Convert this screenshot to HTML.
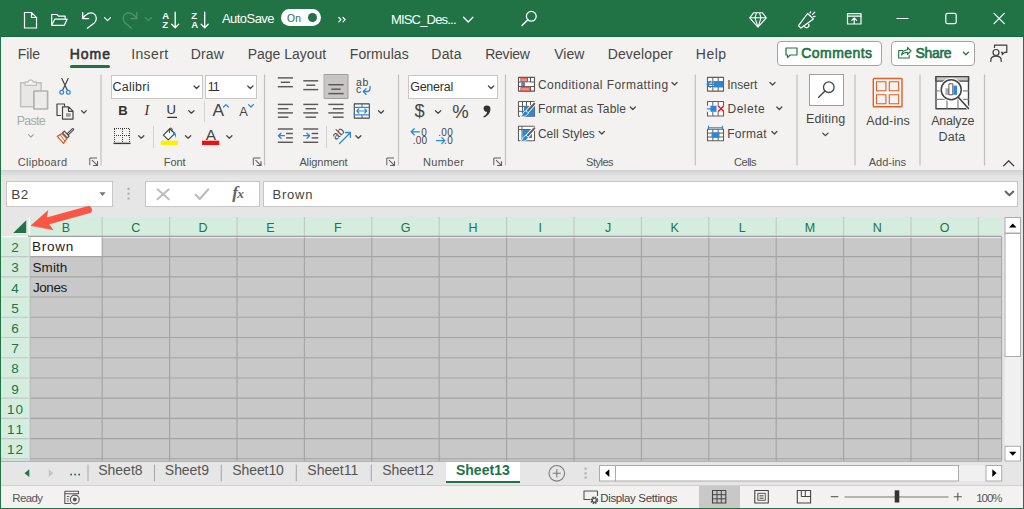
<!DOCTYPE html>
<html>
<head>
<meta charset="utf-8">
<title>Excel</title>
<style>
*{box-sizing:border-box;margin:0;padding:0}
html,body{width:1024px;height:509px;overflow:hidden;background:#f3f2f1;font-family:"Liberation Sans",sans-serif;}
#app{position:relative;width:1024px;height:509px;overflow:hidden;background:#f3f2f1;}
.abs{position:absolute}
.t{position:absolute;white-space:nowrap;line-height:1;color:#444}
svg{position:absolute;overflow:visible}
/* frame */
#bl{left:0;top:0;width:1px;height:509px;background:#217346}
#br{left:1022.5px;top:0;width:1.5px;height:509px;background:#217346}
#bb{left:0;top:508px;width:1024px;height:1px;background:#217346}
/* title bar */
#title{left:0;top:0;width:1024px;height:37px;background:#217346}
/* tab row */
#tabs{left:1px;top:37px;width:1022px;height:33px;background:#f3f2f1}
/* ribbon */
#ribbon{left:1px;top:70px;width:1022px;height:100px;background:#f3f2f1}
/* formula bar */
#fbar{left:1px;top:170px;width:1022px;height:47px;background:#e6e6e6}
#fshadow{left:1px;top:170px;width:1022px;height:7px;background:linear-gradient(#d2d2d2,#e6e6e6)}
/* grid */
#grid{left:1px;top:217px;width:1001px;height:244px;background:#c6c6c6}
/* sheet tabs */
#sheetbar{left:1px;top:461px;width:1022px;height:25px;background:#e6e6e6}
#status{left:1px;top:486px;width:1022px;height:22px;background:#f3f2f1}
</style>
</head>
<body>
<div id="app">
<div id="title" class="abs"></div>
<div id="tabs" class="abs"></div>
<div id="ribbon" class="abs"></div>
<div id="fbar" class="abs"></div>
<div id="fshadow" class="abs"></div>
<div id="grid" class="abs"></div>
<div id="sheetbar" class="abs"></div>
<div id="status" class="abs"></div>
<!--TITLE-->
<!-- title bar icons -->
<svg style="left:0;top:0" width="1024" height="37" viewBox="0 0 1024 37" fill="none" stroke="#fff" stroke-width="1.2" stroke-linejoin="round" stroke-linecap="round">
<!-- new doc -->
<path d="M24.5 12.5h7l5 5v10.5h-12z M31.5 12.5v5h5" stroke-linejoin="miter"/>
<!-- open folder -->
<path d="M51.7 25.3v-10.8h5.2l1.7 1.7h6.6v3 M51.7 25.3l3-6.1h12.4l-2.8 6.1z"/>
<!-- undo -->
<path d="M82.7 12.6v6h6 M82.9 18.4c2.5-4.5 7.5-6.8 11-4.6c3.300 2.100 3.100 6.400 0.300 9.200l-6.800 5.200" stroke-width="1.3"/>
<path d="M104.500 17.600l3 3l3-3" stroke-width="1.2"/>
<!-- redo (dim) -->
<g stroke="#4f9570">
<path d="M136.800 12.600v6h-6 M136.600 18.400c-2.500-4.500-7.500-6.800-11-4.600c-3.300 2.100-3.100 6.400-0.300 9.200l6.200 5.200" stroke-width="1.3"/>
<path d="M145.300 17.600l3 3l3-3"/>
</g>
<!-- sort arrows -->
<path d="M175.200 12.200v15.500 M171.700 24.300l3.500 3.500l3.500-3.500 M204.700 12.200v15.500 M201.200 24.300l3.500 3.500l3.500-3.500" stroke-width="1.3"/>
<!-- chevron >> -->
<path d="M338.800 17.500l2.200 2.200l-2.200 2.200 M343 17.500l2.200 2.200l-2.200 2.200" stroke-width="1.2"/>
<!-- title chevron -->
<path d="M463.500 17.300l4.700 4.700l4.700-4.700" stroke-width="1.3"/>
<!-- search -->
<circle cx="531.300" cy="16.300" r="4.900" stroke-width="1.300"/><path d="M527.800 19.800l-5.800 5.800" stroke-width="1.400"/>
<!-- diamond -->
<path d="M753.500 12.800h9l3.800 5l-8.300 9.300l-8.300-9.300z M749.700 17.800h16.600 M755 17.800l3 9.300l3-9.300 M755 17.800l1.500-5 M761 17.800l-1.500-5" stroke-width="1.100"/>
<!-- megaphone -->
<path d="M807.600 13.500L813.400 18.900L800.900 28.100L798.500 25.700Z M804.300 26.300a2.400 2.400 0 0 0 4.400-2" stroke-width="1.250"/>
<path d="M810 13l0.600-1.200 M812.400 14.400l2.300-2.200 M813.300 16.600l1.700-0.200" stroke-width="1.250"/>
<!-- ribbon display -->
<rect x="847.500" y="13.700" width="13.500" height="10.300" stroke-width="1.200"/><path d="M847.500 16.200h13.500" stroke-width="1.200"/><path d="M854.200 23.500v-5.500 M851.800 20.300l2.400-2.400l2.400 2.400" stroke-width="1.200"/>
<!-- window controls -->
<path d="M897 18.500h11" stroke-width="1.200"/>
<rect x="945.800" y="13.300" width="10.400" height="10.400" rx="1.800" stroke-width="1.200"/>
<path d="M994 13.300l10.300 10.300 M1004.300 13.300l-10.300 10.300" stroke-width="1.200"/>
</svg>
<div class="abs" style="left:281px;top:9px;width:40px;height:17px;border-radius:9px;background:#fff"></div>
<div class="abs" style="left:308px;top:13.200px;width:9.200px;height:9.200px;border-radius:5px;background:#217346"></div>
<div class="t" id="autosave" style="left:221.97px;top:12px;font-size:13px;color:#fff;letter-spacing:-0.54px;">AutoSave</div>
<div class="t" id="on" style="left:287.02px;top:14px;font-size:10.3px;color:#217346;letter-spacing:0.2px;">On</div>
<div class="t" id="fname" style="left:390.93px;top:13px;font-size:13px;color:#fff;letter-spacing:-0.81px;">MISC_Des...</div>
<div class="t" style="left:162.17px;top:11px;font-size:9.5px;color:#fff;font-weight:bold;">A</div>
<div class="t" style="left:162.32px;top:20px;font-size:9.5px;color:#fff;font-weight:bold;">Z</div>
<div class="t" style="left:191.32px;top:11px;font-size:9.5px;color:#fff;font-weight:bold;">Z</div>
<div class="t" style="left:191.17px;top:20px;font-size:9.5px;color:#fff;font-weight:bold;">A</div>
<div class="abs" id="tline" style="left:0;top:36px;width:1024px;height:1px;background:#156a3b"></div>
<!--/TITLE-->
<!--TABS-->
<div class="t" style="left:17.85px;top:47px;font-size:14px;color:#484644;letter-spacing:-0.16px;">File</div>
<div class="t" style="left:131.21px;top:47px;font-size:14px;color:#484644;letter-spacing:0.37px;">Insert</div>
<div class="t" style="left:190.65px;top:47px;font-size:14px;color:#484644;letter-spacing:0.15px;">Draw</div>
<div class="t" style="left:247.65px;top:47px;font-size:14px;color:#484644;">Page Layout</div>
<div class="t" style="left:349.85px;top:47px;font-size:14px;color:#484644;letter-spacing:0.07px;">Formulas</div>
<div class="t" style="left:431.35px;top:47px;font-size:14px;color:#484644;letter-spacing:0.19px;">Data</div>
<div class="t" style="left:485.15px;top:47px;font-size:14px;color:#484644;letter-spacing:-0.22px;">Review</div>
<div class="t" style="left:554.24px;top:47px;font-size:14px;color:#484644;letter-spacing:0.04px;">View</div>
<div class="t" style="left:607.65px;top:47px;font-size:14px;color:#484644;letter-spacing:0.16px;">Developer</div>
<div class="t" style="left:695.85px;top:47px;font-size:14px;color:#484644;letter-spacing:0.47px;">Help</div>
<div class="t" style="left:69.65px;top:47px;font-size:14px;color:#323130;letter-spacing:0.98px;-webkit-text-stroke:0.55px #323130;">Home</div>
<div class="abs" style="left:70px;top:65px;width:40px;height:3px;background:#217346;border-radius:1.5px"></div>
<div class="abs" style="left:777px;top:40.5px;width:105px;height:25px;background:#fff;border:1px solid #a6a4a2;border-radius:4px"></div>
<div class="abs" style="left:890.5px;top:40.5px;width:84.5px;height:25px;background:#fff;border:1px solid #a6a4a2;border-radius:4px"></div>
<div class="t" style="left:801.3px;top:46px;font-size:14px;color:#217346;letter-spacing:0.44px;-webkit-text-stroke:0.6px #217346;">Comments</div>
<div class="t" style="left:915.57px;top:46px;font-size:14px;color:#217346;letter-spacing:-0.33px;-webkit-text-stroke:0.6px #217346;">Share</div>
<svg style="left:0;top:37px" width="1024" height="33" viewBox="0 37 1024 33" fill="none" stroke-linecap="round" stroke-linejoin="round">
<path d="M786 48h11v7h-6.800l-2.700 2.600v-2.600h-1.500z" stroke="#217346" stroke-width="1.200"/>
<path d="M902.500 50.500h-3.800v7.500h10.500v-2.500 M901.500 55c0.500-3.200 2.800-5 6-5.200v-2.300l3.500 3.500l-3.500 3.500v-2.300c-2.500 0-4.500 0.800-6 2.800z" stroke="#217346" stroke-width="1.100"/>
<path d="M963.45 52.3L965.9 54.7L968.35 52.3" stroke="#217346" stroke-width="1.3" fill="none" stroke-linecap="round" stroke-linejoin="round"/>
<circle cx="996" cy="52.500" r="3" stroke="#3b3a39" stroke-width="1.200"/><path d="M990.800 61.500v-1c0-2.600 2.200-4.300 5.200-4.300s5.200 1.700 5.200 4.300v1" stroke="#3b3a39" stroke-width="1.200"/><path d="M994.500 47.500v-2.300h12.300v7.200h-2.300l-2.200 2.200v-2.200h-0.800" stroke="#3b3a39" stroke-width="1.200"/>
</svg>
<!--/TABS-->
<!--RIBBON-->
<div class="abs" style="left:110.500px;top:74.500px;width:92.500px;height:24px;background:#fff;border:1px solid #c8c6c4"></div>
<div class="abs" style="left:205px;top:74.500px;width:52px;height:24px;background:#fff;border:1px solid #c8c6c4"></div>
<div class="abs" style="left:407.500px;top:74.500px;width:90.500px;height:24px;background:#fff;border:1px solid #c8c6c4"></div>
<div class="abs" style="left:809px;top:74px;width:34.500px;height:32px;background:#fff;border:1px solid #a19f9d"></div>
<svg style="left:0;top:70px" width="1024" height="100" viewBox="0 70 1024 100" fill="none" stroke-linecap="round" stroke-linejoin="round">
<path d="M101 74.500V165.500" stroke="#c2c0be" stroke-width="1.200" stroke-linecap="butt"/>
<path d="M264.5 74.500V165.500" stroke="#c2c0be" stroke-width="1.200" stroke-linecap="butt"/>
<path d="M398.5 74.500V165.500" stroke="#c2c0be" stroke-width="1.200" stroke-linecap="butt"/>
<path d="M505.5 74.500V165.500" stroke="#c2c0be" stroke-width="1.200" stroke-linecap="butt"/>
<path d="M695.3 74.500V165.500" stroke="#c2c0be" stroke-width="1.200" stroke-linecap="butt"/>
<path d="M797 74.500V165.500" stroke="#c2c0be" stroke-width="1.200" stroke-linecap="butt"/>
<path d="M855 74.500V165.500" stroke="#c2c0be" stroke-width="1.200" stroke-linecap="butt"/>
<path d="M920 74.500V165.500" stroke="#c2c0be" stroke-width="1.200" stroke-linecap="butt"/>
<path d="M984.5 74.500V165.500" stroke="#c2c0be" stroke-width="1.200" stroke-linecap="butt"/>
<path d="M204.4 101V122" stroke="#d2d0ce" stroke-width="1" stroke-linecap="butt"/>
<path d="M153.5 126V148" stroke="#d2d0ce" stroke-width="1" stroke-linecap="butt"/>
<path d="M326.5 126V148" stroke="#d2d0ce" stroke-width="1" stroke-linecap="butt"/>
<path d="M89.8 165.200v-7.200h7.200" stroke="#605e5c" stroke-width="1" stroke-linejoin="miter" stroke-linecap="butt"/>
<path d="M92.3 160.300l5 5 M97.5 161.500v4h-4" stroke="#605e5c" stroke-width="1.100" stroke-linejoin="miter"/>
<path d="M253.3 165.200v-7.200h7.200" stroke="#605e5c" stroke-width="1" stroke-linejoin="miter" stroke-linecap="butt"/>
<path d="M255.8 160.300l5 5 M261 161.500v4h-4" stroke="#605e5c" stroke-width="1.100" stroke-linejoin="miter"/>
<path d="M386.8 165.200v-7.200h7.200" stroke="#605e5c" stroke-width="1" stroke-linejoin="miter" stroke-linecap="butt"/>
<path d="M389.3 160.300l5 5 M394.5 161.500v4h-4" stroke="#605e5c" stroke-width="1.100" stroke-linejoin="miter"/>
<path d="M493.8 165.200v-7.200h7.200" stroke="#605e5c" stroke-width="1" stroke-linejoin="miter" stroke-linecap="butt"/>
<path d="M496.3 160.300l5 5 M501.5 161.500v4h-4" stroke="#605e5c" stroke-width="1.100" stroke-linejoin="miter"/>
<path d="M20.600 82.800h20.600v24h-20.600z" fill="#e9e7e5" stroke="#c2c0be" stroke-width="1.500"/>
<path d="M25 85.300v-3.300h3a2.800 2.800 0 0 1 5.400 0h3v3.300z" stroke="#c2c0be" stroke-width="1.300" fill="#f3f2f1"/>
<rect x="33.900" y="91" width="13.700" height="18" rx="0.500" stroke="#b3b1af" stroke-width="1.700" fill="#ecebe9"/>
<path d="M28.45 134.7L30.9 137.1L33.35 134.7" stroke="#a19f9d" stroke-width="1.1" fill="none" stroke-linecap="round" stroke-linejoin="round"/>
<path d="M61.800 78.500l5.600 11.800 M68.200 78.500l-5.600 11.800" stroke="#444" stroke-width="1.200"/>
<circle cx="61.700" cy="92.300" r="1.900" stroke="#2b88d8" stroke-width="1.200"/><circle cx="68.300" cy="92.300" r="1.900" stroke="#2b88d8" stroke-width="1.200"/>
<path d="M60.500 115.500h-3.500v-11.500h7.500v2.500" stroke="#444" stroke-width="1.200"/>
<path d="M62.500 106.800h6.200l4.300 4.300v8h-10.500z M68.500 107v4.300h4.300" stroke="#444" stroke-width="1.200" fill="#f3f2f1"/>
<rect x="66" y="113.200" width="4.700" height="3.600" fill="#a19f9d"/>
<path d="M81.45 110.6L83.9 113L86.35 110.6" stroke="#444" stroke-width="1.2" fill="none" stroke-linecap="round" stroke-linejoin="round"/>
<path d="M67.500 134.500l5.500-5.200" stroke="#444" stroke-width="2.600"/>
<path d="M67.500 134.500l5.500-5.200" stroke="#f3f2f1" stroke-width="0.800"/>
<path d="M64.300 131.200l4.800 4.900l-1.800 1.800l-4.800-4.900z" stroke="#444" stroke-width="1.100" fill="#f3f2f1"/>
<path d="M61.800 133.600l4.900 5l-3.200 4.800l-6.200-7z" stroke="#d8622a" stroke-width="1.300" fill="#fdf6f1"/>
<path d="M60.500 135.500l4.500 5.500" stroke="#d8622a" stroke-width="1"/>
<path d="M194.05 86L196.55 88.5L199.05 86" stroke="#444" stroke-width="1.3" fill="none" stroke-linecap="round" stroke-linejoin="round"/>
<path d="M247.75 86L250.35 88.5L252.95 86" stroke="#444" stroke-width="1.3" fill="none" stroke-linecap="round" stroke-linejoin="round"/>
<path d="M167.300 117.400h9.700" stroke="#323130" stroke-width="1.200" stroke-linecap="butt"/>
<path d="M188.75 110.7L191.4 113.2L194.05 110.7" stroke="#444" stroke-width="1.2" fill="none" stroke-linecap="round" stroke-linejoin="round"/>
<path d="M223.500 107l2.400-2.400l2.400 2.400" stroke="#2b88d8" stroke-width="1.300"/>
<path d="M248.600 104.600l2.400 2.400l2.400-2.400" stroke="#2b88d8" stroke-width="1.300"/>
<path d="M114 128.500h16 M114 135.500h16 M114.500 129v14 M122.500 129v14 M129.500 129v14" stroke="#3b3a39" stroke-width="1" stroke-dasharray="1 1" stroke-linecap="butt"/>
<path d="M113.500 143.400h17" stroke="#3b3a39" stroke-width="1.400" stroke-linecap="butt"/>
<path d="M138.65 135.7L141.25 138.2L143.85 135.7" stroke="#444" stroke-width="1.2" fill="none" stroke-linecap="round" stroke-linejoin="round"/>
<path d="M169.800 128.800L163.400 135.100L168.300 139.900L174.700 133.600Z" stroke="#444" stroke-width="1.200" fill="#fff"/>
<path d="M169.400 132.800v-3.300a1.400 1.400 0 0 1 2.800 0v1.800" stroke="#444" stroke-width="1"/>
<path d="M173.800 131c2 1.600 2.700 4.200 2.200 7.200c-0.600-2.300-1.500-3.500-3.100-4.500z" fill="#2b88d8" stroke="none"/>
<rect x="160.800" y="140.700" width="17.200" height="4.300" fill="#ffef00"/>
<path d="M185.45 135.7L188.1 138.2L190.75 135.7" stroke="#444" stroke-width="1.2" fill="none" stroke-linecap="round" stroke-linejoin="round"/>
<rect x="202" y="140.700" width="17.200" height="4.300" fill="#ee1111"/>
<path d="M226.75 135.7L229.35 138.2L231.95 135.7" stroke="#444" stroke-width="1.2" fill="none" stroke-linecap="round" stroke-linejoin="round"/>
<rect x="324.500" y="74.500" width="23.500" height="24" fill="#c8c6c4" stroke="#a19f9d" stroke-width="1"/>
<path d="M277.8 77.9H292.9" stroke="#5a5856" stroke-width="1.45" stroke-linecap="butt"/>
<path d="M280.8 82.3H289.9" stroke="#5a5856" stroke-width="1.45" stroke-linecap="butt"/>
<path d="M277.8 86.7H292.9" stroke="#5a5856" stroke-width="1.45" stroke-linecap="butt"/>
<path d="M303.3 80.8H318.2" stroke="#5a5856" stroke-width="1.45" stroke-linecap="butt"/>
<path d="M306.3 85.2H315.2" stroke="#5a5856" stroke-width="1.45" stroke-linecap="butt"/>
<path d="M303.3 89.6H318.2" stroke="#5a5856" stroke-width="1.45" stroke-linecap="butt"/>
<path d="M328.3 84.7H343.6" stroke="#5a5856" stroke-width="1.45" stroke-linecap="butt"/>
<path d="M331.3 89.2H340.6" stroke="#5a5856" stroke-width="1.45" stroke-linecap="butt"/>
<path d="M328.3 93.6H343.6" stroke="#5a5856" stroke-width="1.45" stroke-linecap="butt"/>
<path d="M277.8 104.4H292.9" stroke="#5a5856" stroke-width="1.45" stroke-linecap="butt"/>
<path d="M277.8 108.7H288.4" stroke="#5a5856" stroke-width="1.45" stroke-linecap="butt"/>
<path d="M277.8 112.9H292.9" stroke="#5a5856" stroke-width="1.45" stroke-linecap="butt"/>
<path d="M277.8 117.2H288.4" stroke="#5a5856" stroke-width="1.45" stroke-linecap="butt"/>
<path d="M303.3 104.4H318.2" stroke="#5a5856" stroke-width="1.45" stroke-linecap="butt"/>
<path d="M305.55 108.7H315.95" stroke="#5a5856" stroke-width="1.45" stroke-linecap="butt"/>
<path d="M303.3 112.9H318.2" stroke="#5a5856" stroke-width="1.45" stroke-linecap="butt"/>
<path d="M305.55 117.2H315.95" stroke="#5a5856" stroke-width="1.45" stroke-linecap="butt"/>
<path d="M328.3 104.4H343.6" stroke="#5a5856" stroke-width="1.45" stroke-linecap="butt"/>
<path d="M332.8 108.7H343.6" stroke="#5a5856" stroke-width="1.45" stroke-linecap="butt"/>
<path d="M328.3 112.9H343.6" stroke="#5a5856" stroke-width="1.45" stroke-linecap="butt"/>
<path d="M332.8 117.2H343.6" stroke="#5a5856" stroke-width="1.45" stroke-linecap="butt"/>
<path d="M370 86.500v2.500a2.500 2.500 0 0 1-2.500 2.500h-4 M366 88.800l-2.700 2.700l2.700 2.700" stroke="#2b88d8" stroke-width="1.300"/>
<rect x="354.300" y="103.900" width="15" height="14.200" stroke="#444" stroke-width="1.100" fill="#fff"/>
<path d="M362 104v3 M362 115v3" stroke="#605e5c" stroke-width="1" stroke-linecap="butt"/>
<path d="M354.300 107.300h15 M354.300 114.800h15" stroke="#2b88d8" stroke-width="1.300" stroke-linecap="butt"/>
<path d="M356.800 111h10 M358.800 109l-2 2l2 2 M364.800 109l2 2l-2 2" stroke="#2b88d8" stroke-width="1.200"/>
<path d="M378.45 110.7L381 113.2L383.55 110.7" stroke="#444" stroke-width="1.2" fill="none" stroke-linecap="round" stroke-linejoin="round"/>
<path d="M277.8 129H292.9" stroke="#5a5856" stroke-width="1.45" stroke-linecap="butt"/>
<path d="M286.1 133.5H292.9" stroke="#5a5856" stroke-width="1.45" stroke-linecap="butt"/>
<path d="M286.1 137.9H292.9" stroke="#5a5856" stroke-width="1.45" stroke-linecap="butt"/>
<path d="M277.8 142.3H292.9" stroke="#5a5856" stroke-width="1.45" stroke-linecap="butt"/>
<path d="M303.3 129H318.2" stroke="#5a5856" stroke-width="1.45" stroke-linecap="butt"/>
<path d="M311.6 133.5H318.2" stroke="#5a5856" stroke-width="1.45" stroke-linecap="butt"/>
<path d="M311.6 137.9H318.2" stroke="#5a5856" stroke-width="1.45" stroke-linecap="butt"/>
<path d="M303.3 142.3H318.2" stroke="#5a5856" stroke-width="1.45" stroke-linecap="butt"/>
<path d="M284.500 135.700h-6 M281 133.200l-2.600 2.500l2.600 2.500" stroke="#2b88d8" stroke-width="1.300"/>
<path d="M303.500 135.700h6 M307 133.200l2.600 2.500l-2.600 2.500" stroke="#2b88d8" stroke-width="1.300"/>
<path d="M339.500 143.500l10.500-10.500 M345.500 132.500h4.800v4.800" stroke="#2b88d8" stroke-width="1.300"/>
<path d="M355.85 135.7L358.4 138.2L360.95 135.7" stroke="#444" stroke-width="1.2" fill="none" stroke-linecap="round" stroke-linejoin="round"/>
<path d="M488.45 86L491.1 88.5L493.75 86" stroke="#444" stroke-width="1.3" fill="none" stroke-linecap="round" stroke-linejoin="round"/>
<path d="M435.45 110.7L438.1 113.2L440.75 110.7" stroke="#444" stroke-width="1.2" fill="none" stroke-linecap="round" stroke-linejoin="round"/>
<path d="M486.800 105.400a3.300 3.300 0 0 1 3.600 3.600c0 3.600-2.300 7-6.500 8.600l-0.600-1.200c2.300-1 3.600-2.600 3.800-4.600a3.200 3.200 0 0 1-3.500-3.200a3.200 3.200 0 0 1 3.200-3.200z" fill="#323130" stroke="none"/>
<path d="M419.500 131.800h-8 M414.200 128.800l-3 3l3 3" stroke="#2b88d8" stroke-width="1.300"/>
<path d="M436.500 140.600h8 M441.800 137.600l3 3l-3 3" stroke="#2b88d8" stroke-width="1.300"/>
<path d="M671.95 82.5L674.5 85L677.05 82.5" stroke="#444" stroke-width="1.2" fill="none" stroke-linecap="round" stroke-linejoin="round"/>
<path d="M630.25 107L632.8 109.5L635.35 107" stroke="#444" stroke-width="1.2" fill="none" stroke-linecap="round" stroke-linejoin="round"/>
<path d="M599.25 131.5L601.8 134L604.35 131.5" stroke="#444" stroke-width="1.2" fill="none" stroke-linecap="round" stroke-linejoin="round"/>
<rect x="518.5" y="77.4" width="16" height="13.7" fill="#fff" stroke="#555" stroke-width="1.1"/>
<path d="M522.5 77.4v13.7M526.5 77.4v13.7M530.5 77.4v13.7M518.5 81.97h16M518.5 86.53h16" stroke="#555" stroke-width="1" stroke-linecap="butt"/>
<rect x="521.300" y="78" width="6.200" height="3.800" fill="#f28b85" stroke="#e03c31" stroke-width="1"/>
<rect x="521.300" y="82.500" width="3.600" height="3.600" fill="#2b88d8"/>
<rect x="525" y="82.500" width="6" height="3.600" fill="#fff"/>
<rect x="521.300" y="87.200" width="8.700" height="3.800" fill="#f28b85" stroke="#e03c31" stroke-width="1"/>
<rect x="518.5" y="101.5" width="16" height="14.7" fill="#fff" stroke="#605e5c" stroke-width="1.1"/>
<path d="M522.5 101.5v14.7M526.5 101.5v14.7M530.5 101.5v14.7M518.5 106.4h16M518.5 111.3h16" stroke="#605e5c" stroke-width="1" stroke-linecap="butt"/>
<path d="M524 106.500h10.500v9.700h-10.500z" fill="#2b88d8" stroke="none"/>
<g transform="translate(0 0)">
<path d="M527 111.800L534.300 103.800" stroke="#fff" stroke-width="3.800" stroke-linecap="round"/>
<path d="M527 111.800L534.300 103.800" stroke="#605e5c" stroke-width="2.100" stroke-linecap="round"/>
<path d="M526.300 110.800l2 1.900c-0.600 2.700-3.600 4.400-8.300 4.100c1.700-0.700 2.300-1.700 2.700-3c0.500-1.700 1.900-2.800 3.600-3z" fill="#2b88d8" stroke="#fff" stroke-width="0.800"/>
</g>
<rect x="518.500" y="126.200" width="16" height="14.500" fill="#fff" stroke="#605e5c" stroke-width="1.100"/>
<path d="M518.500 129.500h16 M522 126.200v14.500" stroke="#605e5c" stroke-width="1" stroke-linecap="butt"/>
<path d="M522.500 130h9.500v8h-9.500z" fill="#2b88d8" stroke="none"/>
<g transform="translate(0 24.6)">
<path d="M527 111.800L534.300 103.800" stroke="#fff" stroke-width="3.800" stroke-linecap="round"/>
<path d="M527 111.800L534.300 103.800" stroke="#605e5c" stroke-width="2.100" stroke-linecap="round"/>
<path d="M526.300 110.800l2 1.900c-0.600 2.700-3.600 4.400-8.300 4.100c1.700-0.700 2.300-1.700 2.700-3c0.500-1.700 1.900-2.800 3.600-3z" fill="#2b88d8" stroke="#fff" stroke-width="0.800"/>
</g>
<path d="M769.95 82.5L772.5 85L775.05 82.5" stroke="#444" stroke-width="1.2" fill="none" stroke-linecap="round" stroke-linejoin="round"/>
<path d="M776.75 107L779.3 109.5L781.85 107" stroke="#444" stroke-width="1.2" fill="none" stroke-linecap="round" stroke-linejoin="round"/>
<path d="M771.85 131.5L774.4 134L776.95 131.5" stroke="#444" stroke-width="1.2" fill="none" stroke-linecap="round" stroke-linejoin="round"/>
<rect x="707.5" y="77.4" width="16" height="13.7" fill="#fff" stroke="#605e5c" stroke-width="1.1"/>
<path d="M712.83 77.4v13.7M718.17 77.4v13.7M707.5 81.97h16M707.5 86.53h16" stroke="#605e5c" stroke-width="1" stroke-linecap="butt"/>
<rect x="714" y="81" width="9.300" height="6.500" fill="#2b88d8" stroke="none"/>
<path d="M707 84.200h8 M710.300 81.200l-3.200 3l3.200 3" stroke="#2b88d8" stroke-width="1.400"/>
<rect x="707.5" y="101.5" width="16" height="14.5" fill="#fff" stroke="#605e5c" stroke-width="1.1"/>
<path d="M712.83 101.5v14.5M718.17 101.5v14.5M707.5 106.33h16M707.5 111.17h16" stroke="#605e5c" stroke-width="1" stroke-linecap="butt"/>
<rect x="706.800" y="105.700" width="17.500" height="6.200" fill="#f3f2f1" stroke="none"/>
<rect x="710.500" y="105.800" width="6" height="6" fill="#2b88d8" stroke="none"/>
<path d="M707.500 108.800h3.500" stroke="#2b88d8" stroke-width="1.200"/>
<path d="M718.500 106.300l5 5 M723.500 106.300l-5 5" stroke="#e81123" stroke-width="1.300"/>
<path d="M708.500 126v3.500 M722.500 126v3.500 M708.500 127.700h14" stroke="#2b88d8" stroke-width="1.100"/>
<rect x="707.5" y="129.3" width="16" height="11.5" fill="#fff" stroke="#605e5c" stroke-width="1.1"/>
<path d="M712.83 129.3v11.5M718.17 129.3v11.5M707.5 133.13h16M707.5 136.97h16" stroke="#605e5c" stroke-width="1" stroke-linecap="butt"/>
<rect x="711.500" y="132.300" width="8" height="5.500" fill="#2b88d8" stroke="none"/>
<circle cx="828.800" cy="87.200" r="5.300" stroke="#444" stroke-width="1.300"/><path d="M825 91l-6.300 6.300" stroke="#444" stroke-width="1.400"/>
<path d="M822.85 133.2L825.4 135.6L827.95 133.2" stroke="#444" stroke-width="1.2" fill="none" stroke-linecap="round" stroke-linejoin="round"/>
<rect x="873.300" y="78.500" width="28.700" height="28.300" rx="0.800" stroke="#d8622a" stroke-width="1.400"/>
<rect x="876.5" y="81.7" width="9.400" height="9" stroke="#d8622a" stroke-width="1.100"/>
<rect x="876.5" y="94.8" width="9.400" height="9" stroke="#d8622a" stroke-width="1.100"/>
<rect x="889.3" y="81.7" width="9.400" height="9" stroke="#d8622a" stroke-width="1.100"/>
<rect x="889.3" y="94.8" width="9.400" height="9" stroke="#d8622a" stroke-width="1.100"/>
<rect x="936" y="76.600" width="32.500" height="32.200" fill="#fff" stroke="#444" stroke-width="1.400"/>
<rect x="936" y="76.600" width="32.500" height="4.500" fill="#c8c6c4" stroke="#444" stroke-width="1.400"/>
<path d="M936 90.900h32.500 M936 99.300h32.500 M947 81v27.500 M958 81v27.500" stroke="#8a8886" stroke-width="1.300" stroke-linecap="butt"/>
<circle cx="951.200" cy="89.700" r="10.600" fill="#fff" stroke="#fff" stroke-width="2.200"/>
<path d="M958.500 97.300l10 11" stroke="#fff" stroke-width="3.600"/>
<circle cx="951.200" cy="89.700" r="10" fill="#fff" stroke="#444" stroke-width="1.500"/>
<rect x="945.300" y="88.200" width="3.600" height="6.600" fill="#b3b1af"/><rect x="949.300" y="83.800" width="3.500" height="11" fill="#fff" stroke="#444" stroke-width="0.900"/><rect x="953.400" y="85.600" width="3.600" height="9.200" fill="#2b88d8"/>
<path d="M958.300 97.200l10.200 11.300" stroke="#444" stroke-width="1.700"/>
<path d="M1003.700 165.700l5-4.900l5 4.900" stroke="#444" stroke-width="1.300"/>
</svg>
<div class="t" style="left:17.75px;top:157px;font-size:11px;color:#525150;letter-spacing:0.27px;">Clipboard</div>
<div class="t" style="left:163.8px;top:157px;font-size:11px;color:#525150;letter-spacing:-0.11px;">Font</div>
<div class="t" style="left:299.38px;top:157px;font-size:11px;color:#525150;letter-spacing:-0.09px;">Alignment</div>
<div class="t" style="left:423px;top:157px;font-size:11px;color:#525150;letter-spacing:0.37px;">Number</div>
<div class="t" style="left:586.11px;top:157px;font-size:11px;color:#525150;letter-spacing:-0.51px;">Styles</div>
<div class="t" style="left:734.05px;top:157px;font-size:11px;color:#525150;letter-spacing:-0.48px;">Cells</div>
<div class="t" style="left:868.68px;top:157px;font-size:11px;color:#525150;letter-spacing:0.02px;">Add-ins</div>
<div class="t" style="left:16.68px;top:115px;font-size:12.5px;color:#acaaa8;letter-spacing:-0.72px;">Paste</div>
<div class="t" style="left:112.38px;top:81px;font-size:12.5px;color:#323130;letter-spacing:0.29px;">Calibri</div>
<div class="t" style="left:207.85px;top:81px;font-size:12.5px;color:#323130;letter-spacing:-1.23px;">11</div>
<div class="t" style="left:118.14px;top:104px;font-size:13px;color:#323130;font-weight:bold;">B</div>
<div class="t" style="left:144.56px;top:104px;font-size:14px;color:#323130;font-style:italic;font-family:'Liberation Serif',serif;">I</div>
<div class="t" style="left:166.5px;top:103px;font-size:13px;color:#323130;">U</div>
<div class="t" style="left:212.47px;top:102px;font-size:17.3px;color:#444;">A</div>
<div class="t" style="left:239.37px;top:106px;font-size:12.8px;color:#444;">A</div>
<div class="t" style="left:205.67px;top:127px;font-size:15.5px;color:#484644;">A</div>
<div class="t" style="left:355.96px;top:77px;font-size:10.5px;color:#444;letter-spacing:0.6px;">ab</div>
<div class="t" style="left:355.96px;top:84px;font-size:10.5px;color:#444;">c</div>
<div class="t" style="left:332.300px;top:127.500px;font-size:11.500px;color:#444;transform:rotate(-43deg);transform-origin:50% 50%">ab</div>
<div class="t" style="left:410.18px;top:81px;font-size:12.5px;color:#323130;letter-spacing:-0.24px;">General</div>
<div class="t" style="left:414.52px;top:102px;font-size:18.2px;color:#484644;">$</div>
<div class="t" style="left:452.35px;top:103px;font-size:18.5px;color:#444;">%</div>
<div class="t" style="left:421.21px;top:128px;font-size:10px;color:#444;">0</div>
<div class="t" style="left:412.69px;top:136px;font-size:10px;color:#444;letter-spacing:0.29px;">.00</div>
<div class="t" style="left:438.29px;top:128px;font-size:10px;color:#444;letter-spacing:0.29px;">.00</div>
<div class="t" style="left:443.89px;top:136px;font-size:10px;color:#444;letter-spacing:0.55px;">.0</div>
<div class="t" style="left:537.9px;top:79px;font-size:12px;color:#484644;letter-spacing:0.45px;">Conditional Formatting</div>
<div class="t" style="left:537.92px;top:103px;font-size:12px;color:#484644;letter-spacing:0.16px;">Format as Table</div>
<div class="t" style="left:537.9px;top:128px;font-size:12px;color:#484644;letter-spacing:0.03px;">Cell Styles</div>
<div class="t" style="left:727.2px;top:79px;font-size:12px;color:#484644;letter-spacing:0.02px;">Insert</div>
<div class="t" style="left:727.52px;top:103px;font-size:12px;color:#484644;letter-spacing:0.49px;">Delete</div>
<div class="t" style="left:727.32px;top:128px;font-size:12px;color:#484644;letter-spacing:0.23px;">Format</div>
<div class="t" style="left:805.88px;top:113px;font-size:12.5px;color:#484644;letter-spacing:0.2px;">Editing</div>
<div class="t" style="left:866.27px;top:115px;font-size:12.5px;color:#484644;letter-spacing:0.2px;">Add-ins</div>
<div class="t" style="left:931.18px;top:115px;font-size:12.5px;color:#484644;letter-spacing:-0.21px;">Analyze</div>
<div class="t" style="left:938.58px;top:131px;font-size:12.5px;color:#484644;letter-spacing:0.1px;">Data</div>
<!--/RIBBON-->
<!--FORMULA-->
<div class="abs" style="left:6.300px;top:181px;width:106.500px;height:25.500px;background:#fff;border:1px solid #c6c6c6"></div>
<div class="abs" style="left:144.500px;top:181px;width:115px;height:25.500px;background:#fff;border:1px solid #c6c6c6"></div>
<div class="abs" style="left:262.500px;top:181px;width:755.500px;height:25.500px;background:#fff;border:1px solid #c6c6c6"></div>
<svg style="left:0;top:170px" width="1024" height="47" viewBox="0 170 1024 47" fill="none" stroke-linecap="round" stroke-linejoin="round">
<path d="M99.300 192.300h6.400l-3.200 3.600z" fill="#777" stroke="none"/>
<rect x="127.500" y="187.8" width="2" height="2" fill="#a6a6a6"/>
<rect x="127.500" y="192.7" width="2" height="2" fill="#a6a6a6"/>
<rect x="127.500" y="197.5" width="2" height="2" fill="#a6a6a6"/>
<path d="M157.500 189.300l11.300 10 M168.800 189.300l-11.300 10" stroke="#bdbdbd" stroke-width="1.900"/>
<path d="M195.800 194.800l4 4.100l8.500-9.600" stroke="#bdbdbd" stroke-width="2.200"/>
<path d="M1005.500 191.600l3.900 3.700l3.900-3.700" stroke="#666" stroke-width="2.100" />
</svg>
<div class="t" style="left:11.19px;top:188px;font-size:13.5px;color:#444;letter-spacing:0.57px;">B2</div>
<div class="t" style="left:272.53px;top:188px;font-size:13px;color:#444;letter-spacing:0.76px;">Brown</div>
<div class="t" style="left:232.300px;top:183.500px;font-size:17.500px;font-style:italic;font-weight:bold;font-family:'Liberation Serif',serif;color:#666;letter-spacing:-0.800px">f<span style="font-size:13.500px">x</span></div>
<!--/FORMULA-->
<!--GRID-->
<div class="abs" style="left:1px;top:217px;width:1001px;height:244px;background:#c8c8c8"></div>
<div class="abs" style="left:1px;top:217px;width:29px;height:20px;background:#e6e6e6"></div>
<div class="abs" style="left:30px;top:217px;width:971.500px;height:19.500px;background:#d4eddf"></div>
<div class="abs" style="left:1px;top:237px;width:28.500px;height:224px;background:#d4eddf"></div>
<div class="abs" style="left:1001.500px;top:217px;width:21.500px;height:244px;background:#e6e6e6"></div>
<div class="abs" style="left:30px;top:237px;width:72px;height:19.300px;background:#fff"></div>
<svg style="left:0;top:200px" width="1024" height="262" viewBox="0 200 1024 262" fill="none">
<path d="M29.300 217V236.500" stroke="#fff" stroke-width="1.200"/>
<path d="M29.300 237V461" stroke="#e9f1ec" stroke-width="1"/>
<path d="M102.2 217V236M169.6 217V236M237 217V236M304.4 217V236M371.8 217V236M439.2 217V236M506.6 217V236M574 217V236M641.4 217V236M708.8 217V236M776.2 217V236M843.6 217V236M911 217V236M978.4 217V236" stroke="#bfc9c3" stroke-width="1.100"/>
<path d="M1 256.62H28.800M1 276.84H28.800M1 297.06H28.800M1 317.28H28.800M1 337.5H28.800M1 357.72H28.800M1 377.94H28.800M1 398.16H28.800M1 418.38H28.800M1 438.6H28.800M1 458.82H28.800" stroke="#bfc9c3" stroke-width="1.100"/>
<path d="M30 236.4H1001.500" stroke="#9e9e9e" stroke-width="1.100"/>
<path d="M1 236.7H29" stroke="#fff" stroke-width="1"/>
<path d="M102.500 237.5H1001" stroke="#f0f0f0" stroke-width="0.900"/>
<path d="M102.2 237.500V461M169.6 237.500V461M237 237.500V461M304.4 237.500V461M371.8 237.500V461M439.2 237.500V461M506.6 237.500V461M574 237.500V461M641.4 237.500V461M708.8 237.500V461M776.2 237.500V461M843.6 237.500V461M911 237.500V461M978.4 237.500V461M30 256.62H1001.500M30 276.84H1001.500M30 297.06H1001.500M30 317.28H1001.500M30 337.5H1001.500M30 357.72H1001.500M30 377.94H1001.500M30 398.16H1001.500M30 418.38H1001.500M30 438.6H1001.500M30 458.82H1001.500" stroke="#a3a3a3" stroke-width="1.100"/>
<path d="M1001.700 237V461" stroke="#a0a0a0" stroke-width="1"/>
<path d="M30 237V461" stroke="#b0b0b0" stroke-width="0.800"/>
<path d="M26.200 220.300V233H13.200z" fill="#217346"/>
<rect x="28.300" y="235.500" width="1.200" height="1.200" fill="#217346"/>
<path d="M88.300 209.800L44 222" stroke="#fa5545" stroke-width="7.300" stroke-linecap="round"/>
<path d="M31 225.600L47.800 210.800L46 220.500L53 229.800z" fill="#fa5545" stroke="#fa5545" stroke-width="0.600" stroke-linejoin="round"/>
<rect x="1005" y="217.500" width="15.500" height="15.500" fill="#fff" stroke="#ababab" stroke-width="1"/>
<path d="M1009 227.500h7.500l-3.750-4z" fill="#000"/>
<rect x="1005" y="233" width="15.500" height="213.500" fill="#f0f0f0"/>
<rect x="1005" y="233.500" width="15.500" height="123" fill="#fff" stroke="#ababab" stroke-width="1"/>
<rect x="1005" y="446.300" width="15.500" height="14.700" fill="#fff" stroke="#ababab" stroke-width="1"/>
<path d="M1009 451.800h7.500l-3.750 4z" fill="#000"/>
</svg>
<div class="t" style="left:61.74px;top:222px;font-size:12.5px;color:#217346;">B</div>
<div class="t" style="left:131.31px;top:222px;font-size:12.5px;color:#217346;">C</div>
<div class="t" style="left:198.57px;top:222px;font-size:12.5px;color:#217346;">D</div>
<div class="t" style="left:266.28px;top:222px;font-size:12.5px;color:#217346;">E</div>
<div class="t" style="left:334.02px;top:222px;font-size:12.5px;color:#217346;">F</div>
<div class="t" style="left:400.79px;top:222px;font-size:12.5px;color:#217346;">G</div>
<div class="t" style="left:468.38px;top:222px;font-size:12.5px;color:#217346;">H</div>
<div class="t" style="left:538.56px;top:222px;font-size:12.5px;color:#217346;">I</div>
<div class="t" style="left:604.94px;top:222px;font-size:12.5px;color:#217346;">J</div>
<div class="t" style="left:670.49px;top:222px;font-size:12.5px;color:#217346;">K</div>
<div class="t" style="left:738.72px;top:222px;font-size:12.5px;color:#217346;">L</div>
<div class="t" style="left:804.69px;top:222px;font-size:12.5px;color:#217346;">M</div>
<div class="t" style="left:872.78px;top:222px;font-size:12.5px;color:#217346;">N</div>
<div class="t" style="left:939.84px;top:222px;font-size:12.5px;color:#217346;">O</div>
<div class="t" style="left:11.25px;top:241px;font-size:13.5px;color:#217346;">2</div>
<div class="t" style="left:11.28px;top:261px;font-size:13.5px;color:#217346;">3</div>
<div class="t" style="left:11.29px;top:282px;font-size:13.5px;color:#217346;">4</div>
<div class="t" style="left:11.25px;top:302px;font-size:13.5px;color:#217346;">5</div>
<div class="t" style="left:11.2px;top:322px;font-size:13.5px;color:#217346;">6</div>
<div class="t" style="left:11.24px;top:342px;font-size:13.5px;color:#217346;">7</div>
<div class="t" style="left:11.25px;top:362px;font-size:13.5px;color:#217346;">8</div>
<div class="t" style="left:11.25px;top:383px;font-size:13.5px;color:#217346;">9</div>
<div class="t" style="left:6.97px;top:403px;font-size:13.5px;color:#217346;letter-spacing:0.93px;">10</div>
<div class="t" style="left:6.97px;top:423px;font-size:13.5px;color:#217346;letter-spacing:2.06px;">11</div>
<div class="t" style="left:6.97px;top:443px;font-size:13.5px;color:#217346;letter-spacing:1.09px;">12</div>
<div class="t" style="left:31.99px;top:240px;font-size:13.5px;color:#1a1a1a;letter-spacing:0.73px;transform:scaleY(0.9);transform-origin:0 11px;">Brown</div>
<div class="t" style="left:32.49px;top:261px;font-size:13.5px;color:#1a1a1a;letter-spacing:0.09px;transform:scaleY(0.9);transform-origin:0 11px;">Smith</div>
<div class="t" style="left:32.9px;top:281px;font-size:13.5px;color:#1a1a1a;letter-spacing:-0.41px;transform:scaleY(0.9);transform-origin:0 11px;">Jones</div>
<!--/GRID-->
<!--SHEETS-->
<div class="abs" style="left:445.800px;top:461px;width:74.200px;height:20px;background:#fff"></div>
<div class="abs" style="left:445.800px;top:480.700px;width:74.200px;height:2px;background:#217346"></div>
<div class="abs" style="left:1px;top:485px;width:1022px;height:1px;background:#d0d0d0"></div>
<svg style="left:0;top:461px" width="1024" height="25" viewBox="0 461 1024 25" fill="none">
<path d="M1 461.300H1001.500" stroke="#a8a8a8" stroke-width="1"/>
<path d="M29.300 469.300v7.700l-4.800-3.850z" fill="#217346"/>
<path d="M48.800 469.300v7.700l4.600-3.850z" fill="#c4c4c4"/>
<rect x="70.3" y="473.700" width="1.700" height="1.700" fill="#217346"/>
<rect x="74.3" y="473.700" width="1.700" height="1.700" fill="#217346"/>
<rect x="78.3" y="473.700" width="1.700" height="1.700" fill="#217346"/>
<path d="M88 464.500V481.300" stroke="#ababab" stroke-width="1.100"/>
<path d="M154.5 464.500V481.300" stroke="#ababab" stroke-width="1.100"/>
<path d="M221.3 464.500V481.300" stroke="#ababab" stroke-width="1.100"/>
<path d="M296.3 464.500V481.300" stroke="#ababab" stroke-width="1.100"/>
<path d="M371.3 464.500V481.300" stroke="#ababab" stroke-width="1.100"/>
<circle cx="556.800" cy="473.300" r="7.800" stroke="#7a7a7a" stroke-width="1.100"/><path d="M552.800 473.300h8 M556.800 469.300v8" stroke="#7a7a7a" stroke-width="1.100"/>
<rect x="584.500" y="467.7" width="2.200" height="2.200" fill="#b4b4b4"/>
<rect x="584.500" y="472.2" width="2.200" height="2.200" fill="#b4b4b4"/>
<rect x="584.500" y="476.5" width="2.200" height="2.200" fill="#b4b4b4"/>
<rect x="616" y="465.500" width="370" height="15.500" fill="#f0f0f0"/>
<rect x="599.500" y="465.500" width="16" height="15.500" fill="#fff" stroke="#ababab" stroke-width="1"/>
<path d="M609.300 469.300v7.600l-4.300-3.800z" fill="#000"/>
<rect x="615.500" y="465.500" width="343" height="15.500" fill="#fff" stroke="#ababab" stroke-width="1"/>
<rect x="986" y="465.500" width="15.700" height="15.500" fill="#fff" stroke="#ababab" stroke-width="1"/>
<path d="M992.300 469.300v7.600l4.300-3.800z" fill="#000"/>
</svg>
<div class="t" style="left:98.17px;top:463px;font-size:14px;color:#555;letter-spacing:0.01px;">Sheet8</div>
<div class="t" style="left:164.87px;top:463px;font-size:14px;color:#555;letter-spacing:-0.06px;">Sheet9</div>
<div class="t" style="left:232.37px;top:463px;font-size:14px;color:#555;letter-spacing:-0.11px;">Sheet10</div>
<div class="t" style="left:307.37px;top:463px;font-size:14px;color:#555;letter-spacing:-0.05px;">Sheet11</div>
<div class="t" style="left:382.37px;top:463px;font-size:14px;color:#555;letter-spacing:-0.14px;">Sheet12</div>
<div class="t" style="left:455.91px;top:463px;font-size:14px;color:#217346;letter-spacing:0.03px;font-weight:bold;">Sheet13</div>
<!--/SHEETS-->
<!--STATUS-->
<div class="abs" style="left:698.500px;top:486px;width:41px;height:22px;background:#c8c8c8"></div>
<svg style="left:0;top:486px" width="1024" height="23" viewBox="0 486 1024 23" fill="none" stroke-linejoin="round">
<path d="M64.800 491.300h13.700v3 M64.800 491.300v12.200h6 M64.800 493.700h13.700" stroke="#555" stroke-width="1.100"/>
<path d="M66.800 496.500h2.500 M66.800 498.800h2 M66.800 501h2" stroke="#555" stroke-width="0.900"/>
<circle cx="74.800" cy="499.500" r="4.400" stroke="#555" stroke-width="1.100" fill="#f3f2f1"/><circle cx="74.800" cy="499.500" r="1.900" fill="#555"/>
<path d="M590 499.500h-6v-8.500h13.500v5" stroke="#555" stroke-width="1.100"/>
<circle cx="594.300" cy="500.300" r="3" stroke="#444" stroke-width="1.800" stroke-dasharray="1.400 0.960"/><circle cx="594.300" cy="500.300" r="2" stroke="#444" stroke-width="1.100" fill="#f3f2f1"/>
<rect x="712.500" y="490.500" width="13.300" height="12.500" stroke="#444" stroke-width="1.100"/><path d="M717 490.500v12.500 M721.300 490.500v12.500 M712.500 494.700h13.300 M712.500 498.800h13.300" stroke="#444" stroke-width="1"/>
<rect x="754.800" y="490.500" width="13.500" height="12.500" stroke="#444" stroke-width="1.100"/><rect x="757.800" y="493.300" width="7.500" height="7" stroke="#444" stroke-width="0.900"/><path d="M759.500 495.500h4 M759.500 497h4 M759.500 498.500h4" stroke="#444" stroke-width="0.700"/>
<rect x="797.300" y="490.500" width="13.300" height="12.500" stroke="#444" stroke-width="1.100"/><path d="M801.300 490.500v6h9.300 M805.300 490.500v6" stroke="#444" stroke-width="1"/>
<path d="M830.800 496.700h7.500" stroke="#555" stroke-width="1.100"/>
<path d="M844.500 497h104" stroke="#777" stroke-width="1"/>
<rect x="894.700" y="490.300" width="4.600" height="12.200" fill="#333"/>
<path d="M953.800 496.700h8 M957.800 492.700v8" stroke="#555" stroke-width="1.100"/>
</svg>
<div class="t" style="left:12.26px;top:493px;font-size:11.5px;color:#555;letter-spacing:-0.62px;">Ready</div>
<div class="t" style="left:600.26px;top:493px;font-size:11.5px;color:#444;letter-spacing:-0.35px;">Display Settings</div>
<div class="t" style="left:976.33px;top:493px;font-size:11.5px;color:#555;letter-spacing:-1.11px;">100%</div>
<!--/STATUS-->
<div id="bl" class="abs"></div><div id="br" class="abs"></div><div id="bb" class="abs"></div>
</div>
</body>
</html>
